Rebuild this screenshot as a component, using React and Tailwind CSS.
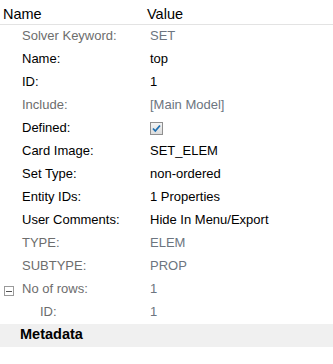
import React from "react";

const G = "text-[#6d6d6d]";
const GV = "text-[#6c7580]";
const B = "text-black";

const rows = [
  { l: "Solver Keyword:", lc: G, v: "SET", vc: GV },
  { l: "Name:", lc: B, v: "top", vc: B },
  { l: "ID:", lc: B, v: "1", vc: B },
  { l: "Include:", lc: G, v: "[Main Model]", vc: GV },
  { l: "Defined:", lc: B, check: true },
  { l: "Card Image:", lc: B, v: "SET_ELEM", vc: B },
  { l: "Set Type:", lc: B, v: "non-ordered", vc: B },
  { l: "Entity IDs:", lc: B, v: "1 Properties", vc: B },
  { l: "User Comments:", lc: B, v: "Hide In Menu/Export", vc: B },
  { l: "TYPE:", lc: G, v: "ELEM", vc: GV },
  { l: "SUBTYPE:", lc: G, v: "PROP", vc: GV },
  { l: "No of rows:", lc: G, v: "1", vc: GV, minus: true },
  { l: "ID:", lc: G, v: "1", vc: GV, child: true },
];

function Check() {
  return (
    <div className="w-[13px] h-[13px] border border-[#8f8f8f] bg-gradient-to-b from-[#f4f4f4] to-[#dcdcdc] flex items-center justify-center">
      <svg width="11" height="11" viewBox="0 0 11 11">
        <path d="M2 5.5 L4.3 8 L9 2.5" fill="none" stroke="#1f6fb0" strokeWidth="1.8" />
      </svg>
    </div>
  );
}

function Minus() {
  return (
    <div className="w-[10px] h-[10px] border border-[#9a9a9a] bg-white flex items-center justify-center">
      <div className="w-[6px] h-px bg-[#555]" />
    </div>
  );
}

export default function App() {
  return (
    <div
      className="w-[333px] h-[364px] bg-white overflow-hidden"
      style={{ fontFamily: '"Liberation Sans", Arial, sans-serif' }}
    >
      <div className="h-[25px] border-b border-[#e3e3e3] flex items-start pt-[5px] text-[14.5px] text-black leading-[18px]">
        <div className="w-[147px] pl-[3px]">Name</div>
        <div>Value</div>
      </div>
      {rows.map((r, i) => (
        <div key={i} className="h-[23px] flex items-center text-[13px] leading-[23px] pb-[2px]">
          <div className="w-[150px] flex items-center">
            {r.minus ? (
              <div className="w-[22px] pl-[4px] pt-[5px] flex items-center">
                <Minus />
              </div>
            ) : (
              <div className={r.child ? "w-[40px]" : "w-[22px]"} />
            )}
            <span className={r.lc}>{r.l}</span>
          </div>
          {r.check ? (
            <div className="pt-[1px]">
              <Check />
            </div>
          ) : (
            <span className={r.vc}>{r.v}</span>
          )}
        </div>
      ))}
      <div className="h-[23px] bg-[#f0f0f0] flex items-center pl-[20px] text-[14.5px] font-bold text-black pb-[1px]">
        Metadata
      </div>
    </div>
  );
}
